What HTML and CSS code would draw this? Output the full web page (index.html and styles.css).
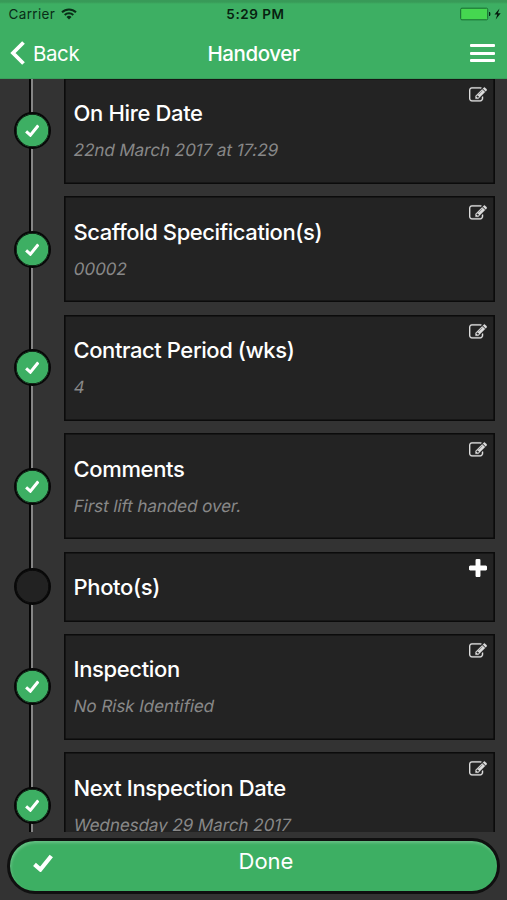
FILE: index.html
```html
<!DOCTYPE html>
<html lang="en">
<head>
<meta charset="utf-8">
<title>Handover</title>
<link rel="stylesheet" href="styles.css">
</head>
<body>
<svg width="0" height="0" class="defs">
  <symbol id="edit" viewBox="0 0 1792 1792"><path d="M888 1184l116-116-152-152-116 116v56h96v96h56zm440-720q-16-16-33 1l-350 350q-17 17-1 33t33-1l350-350q17-17 1-33zm80 594v190q0 119-84.500 203.500t-203.500 84.500h-832q-119 0-203.500-84.500t-84.500-203.500v-832q0-119 84.500-203.500t203.500-84.500h832q63 0 117 25 15 7 18 23 3 17-9 29l-49 49q-14 14-32 8-23-6-45-6h-832q-66 0-113 47t-47 113v832q0 66 47 113t113 47h832q66 0 113-47t47-113v-126q0-13 9-22l64-64q15-15 35-7t20 29zm-96-738l288 288-672 672h-288v-288zm444 132l-92 92-288-288 92-92q28-28 68-28t68 28l152 152q28 28 28 68t-28 68z"/></symbol>
  <symbol id="plus" viewBox="192 128 1408 1408"><path d="M1600 736v192q0 40-28 68t-68 28h-416v416q0 40-28 68t-68 28h-192q-40 0-68-28t-28-68v-416h-416q-40 0-68-28t-28-68v-192q0-40 28-68t68-28h416v-416q0-40 28-68t68-28h192q40 0 68 28t28 68v416h416q40 0 68 28t28 68z"/></symbol>
  <symbol id="check" viewBox="0 0 20 18"><path d="M1.500 10.300L7.400 15.500L18.300 2" fill="none" stroke="#fff" stroke-width="4.200"/></symbol>
</svg>
<div class="app">
  <header class="header">
    <div class="status">
      <div class="carrier"><span>Carrier</span>
        <svg width="16" height="12" viewBox="0 0 16 12" fill="none" stroke="#092c17" stroke-width="2"><path d="M1 4.300a10 10 0 0 1 14 0M3.700 7a6.200 6.200 0 0 1 8.600 0"/><path d="M5.500 9a3.600 3.600 0 0 1 5 0L8 11.600z" fill="#092c17" stroke="none"/></svg>
      </div>
      <div class="time">5:29 PM</div>
      <div class="power">
        <svg width="42" height="14" viewBox="0 0 42 14"><rect x="0.700" y="1.200" width="27" height="11.600" rx="1.200" fill="#45d750" stroke="#176b31"/><path d="M29 5h1q1 2 0 4h-1z" fill="#092c17"/><path d="M39.500 1.500L34.500 7.500h2.800L35.700 12.500L40.700 6.200h-2.800z" fill="#06190d"/></svg>
      </div>
    </div>
    <nav class="nav">
      <div class="back"><svg width="16" height="24" viewBox="0 0 16 24"><path d="M13.500 1.500L3 12L13.500 22.500" fill="none" stroke="#fff" stroke-width="3.800"/></svg><span>Back</span></div>
      <h1>Handover</h1>
      <div class="menu"><i></i><i></i><i></i></div>
    </nav>
  </header>
  <main class="content">
    <div class="list">
      <section class="row"><div class="rail"><div class="dot done"><svg><use href="#check"/></svg></div></div><div class="card"><h2>On Hire Date</h2><p>22nd March 2017 at 17:29</p><svg class="edit"><use href="#edit"/></svg></div></section>
      <section class="row"><div class="rail"><div class="dot done"><svg><use href="#check"/></svg></div></div><div class="card"><h2 class="long">Scaffold Specification(s)</h2><p>00002</p><svg class="edit"><use href="#edit"/></svg></div></section>
      <section class="row"><div class="rail"><div class="dot done"><svg><use href="#check"/></svg></div></div><div class="card"><h2 class="long">Contract Period (wks)</h2><p>4</p><svg class="edit"><use href="#edit"/></svg></div></section>
      <section class="row"><div class="rail"><div class="dot done"><svg><use href="#check"/></svg></div></div><div class="card"><h2>Comments</h2><p>First lift handed over.</p><svg class="edit"><use href="#edit"/></svg></div></section>
      <section class="row short"><div class="rail"><div class="dot"></div></div><div class="card"><h2>Photo(s)</h2><svg class="plus"><use href="#plus"/></svg></div></section>
      <section class="row"><div class="rail"><div class="dot done"><svg><use href="#check"/></svg></div></div><div class="card"><h2>Inspection</h2><p>No Risk Identified</p><svg class="edit"><use href="#edit"/></svg></div></section>
      <section class="row"><div class="rail"><div class="dot done"><svg><use href="#check"/></svg></div></div><div class="card"><h2>Next Inspection Date</h2><p>Wednesday 29 March 2017</p><svg class="edit"><use href="#edit"/></svg></div></section>
    </div>
  </main>
  <footer class="footer">
    <div class="button"><svg class="tick"><use href="#check"/></svg><span>Done</span></div>
  </footer>
</div>
</body>
</html>
```

FILE: styles.css
```css
* { box-sizing: border-box; }
body { margin: 0; background: #333; font-family: Inter, "Liberation Sans", sans-serif; color: #fff; }
h1, h2, p { margin: 0; }
.defs { position: absolute; }
.app { height: 900px; display: flex; flex-direction: column; overflow: hidden; }
.header { height: 79px; flex: none; background: linear-gradient(#389a58 0, #389a58 2px, #3daf63 4px); border-bottom: 1px solid #399f5b; }
.status { height: 28px; display: grid; grid-template-columns: 1fr auto 1fr; align-items: center; color: #092c17; font-size: 13.5px; line-height: 28px; }
.carrier { display: flex; align-items: center; gap: 6px; padding-left: 8.5px; letter-spacing: .35px; }
.time { font-weight: 600; letter-spacing: .55px; padding-left: 4px; color: #071f10; }
.power { display: flex; justify-content: flex-end; padding-right: 5px; }
.nav { height: 50px; display: grid; grid-template-columns: 1fr auto 1fr; align-items: center; }
.back { display: flex; align-items: center; gap: 7px; padding-left: 10px; font-size: 20.5px; letter-spacing: -.4px; }
h1 { font-size: 20.5px; font-weight: 500; letter-spacing: -.4px; }
.menu { display: flex; flex-direction: column; gap: 4.8px; align-items: flex-end; padding-right: 12px; }
.menu i { width: 25px; height: 3px; background: #fff; border-radius: 1px; }
.content { height: 753px; flex: none; overflow: hidden; }
.list { margin-top: -1.2px; }
.row { height: 118.5px; display: flex; }
.row.short { height: 82px; }
.rail { width: 64px; flex: none; display: flex; justify-content: center; background: linear-gradient(90deg, transparent 29px, #050505 29px, #050505 31.500px, #858585 31.500px, #858585 33px, transparent 33px); }
.dot { width: 37px; height: 37px; margin-top: 34.5px; border-radius: 50%; border: 2px solid #080808; box-shadow: inset 0 0 0 .7px #080808; background: #222; display: flex; align-items: center; justify-content: center; }
.short .dot { margin-top: 16.5px; }
.dot.done { background: #3daf63; }
.dot svg { width: 14.5px; height: 13px; }
.card { position: relative; width: 431px; height: 106px; border: 1px solid #0b0b0b; box-shadow: inset 0 0 0 .6px #0b0b0b; background: #232323; padding: 19.5px 8.500px; }
.short .card { height: 70px; }
h2 { font-size: 22px; line-height: 30px; font-weight: 500; letter-spacing: -.35px; white-space: nowrap; }
h2.long { letter-spacing: -.42px; }
p { margin-top: 9px; font-size: 17px; line-height: 26px; color: #888; letter-spacing: -.05px; white-space: nowrap; transform: skewX(-11deg); }
.edit { position: absolute; right: 7px; top: 7px; width: 18px; height: 18px; fill: #ddd; stroke: #ddd; stroke-width: 20px; }
.plus { position: absolute; right: 7px; top: 6.5px; width: 18px; height: 18px; fill: #fff; }
.footer { height: 68px; padding: 6px 7px 5px; }
.button { height: 56px; border: 3px solid #101010; border-radius: 28px; background: #3daf63; box-shadow: inset 1px 2px 3px rgba(255, 255, 255, .22); display: grid; grid-template-columns: 1fr auto 1fr; font-size: 22px; line-height: 41px; }
.tick { width: 20px; height: 18px; margin: 12.5px 0 0 22.5px; }
.button span { padding-left: 25px; }
```
